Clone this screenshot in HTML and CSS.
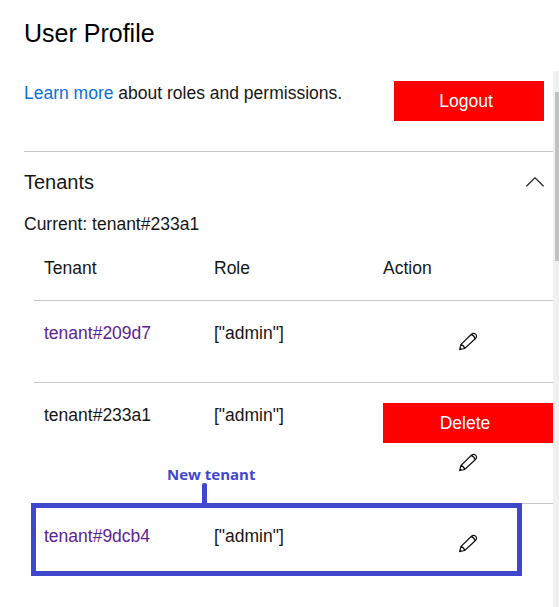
FILE: index.html
```html
<!DOCTYPE html>
<html lang="en">
<head>
<meta charset="utf-8">
<title>User Profile</title>
<link rel="stylesheet" href="styles.css">
</head>
<body>
<svg class="defs" aria-hidden="true">
  <symbol id="pencil" viewBox="0 0 20 20">
    <path d="M1.7 18.5 2.9 13.6 13.4 3.3Q15.6 1.5 17.6 3.1 19.5 5.2 17.5 7.5L6.7 17.5ZM2.9 13.6Q6 14.3 6.7 17.5M13.2 3.6Q16.2 4.3 16.9 7.6M2.2 17.1 3.2 18"/>
  </symbol>
</svg>
<h1 class="title">User Profile</h1>
<div class="panel">
  <main class="content">
    <header class="intro">
      <p class="lead"><a class="link" href="#">Learn more</a> about roles and permissions.</p>
      <button class="btn logout">Logout</button>
    </header>
    <section class="tenants">
      <div class="section-head">
        <h2>Tenants</h2>
        <svg class="chevron" viewBox="0 0 18 10"><path d="M.4 9.3 9 .8l8.6 8.5"/></svg>
      </div>
      <p class="current">Current: tenant#233a1</p>
      <div class="table">
        <div class="row head"><span>Tenant</span><span>Role</span><span>Action</span></div>
        <div class="row">
          <a class="visited" href="#">tenant#209d7</a><span>["admin"]</span>
          <div class="actions"><svg class="pencil"><use href="#pencil"/></svg></div>
        </div>
        <div class="row tall">
          <span>tenant#233a1</span><span>["admin"]</span>
          <div class="actions"><button class="btn">Delete</button><svg class="pencil"><use href="#pencil"/></svg></div>
        </div>
        <div class="row last">
          <a class="visited" href="#">tenant#9dcb4</a><span>["admin"]</span>
          <div class="actions"><svg class="pencil"><use href="#pencil"/></svg></div>
          <div class="callout"><span class="callout-label">New tenant</span></div>
        </div>
      </div>
    </section>
  </main>
  <div class="scrollbar"><div class="thumb"></div></div>
</div>
</body>
</html>
```
FILE: styles.css
```css
* { box-sizing: border-box; }
body {
  margin: 0;
  height: 607px;
  overflow: hidden;
  background: #fff;
  color: #161616;
  font: 17.5px/24px "Liberation Sans", Arial, sans-serif;
}
h1, h2, p { margin: 0; font-weight: 400; }
a { text-decoration: none; }
.defs { display: none; }
.title { height: 71px; padding: 17px 0 0 24px; font-size: 25px; line-height: 32px; color: #000; }
.panel { display: flex; height: 536px; }
.content { width: 529px; margin-left: 24px; }
.intro { display: flex; justify-content: space-between; height: 81px; padding: 10px 9px 0 0; border-bottom: 1px solid #c8c8c8; }
.link { color: #0a6fe0; }
.btn { display: block; width: 100%; height: 40px; padding: 0 0 1px; border: 0; background: #f00; color: #fff; font: inherit; text-indent: -6px; }
.logout { width: 150px; }
.section-head { display: flex; justify-content: space-between; height: 60px; padding: 18px 9px 0 0; }
h2 { font-size: 20px; line-height: 24px; }
.chevron { width: 18px; height: 10px; margin-top: 7px; fill: none; stroke: #222; stroke-width: 1.2; }
.current { height: 24px; }
.table { margin: 12px 0 0 10px; }
.row { position: relative; display: grid; grid-template-columns: 170px 169px 170px; height: 82px; padding: 20px 0 0 10px; border-bottom: 1px solid #c8c8c8; }
.head { height: 53px; padding-top: 8px; }
.tall { height: 121px; }
.last { border: 0; }
.visited { color: #5c2494; }
.pencil { display: block; width: 20px; height: 20px; margin: 10px auto 0; fill: none; stroke: #111; stroke-width: 1.2; }
.tall .pencil, .last .pencil { margin-top: 9px; }
.callout { position: absolute; left: -3px; top: -1px; width: 491px; height: 73px; border: 5px solid #3f48cc; }
.callout::before { content: ""; position: absolute; left: 166px; top: -25px; width: 5px; height: 22px; background: #3f48cc; border-radius: 2px 2px 0 0; }
.callout-label { position: absolute; left: 131px; top: -44px; color: #3f48cc; font: 700 15px/20px "Open Sans", sans-serif; white-space: nowrap; }
.scrollbar { width: 6px; padding: 21px 0 0 2px; background: #f0f0f0; }
.thumb { height: 169px; background: #c1c1c1; }
```
